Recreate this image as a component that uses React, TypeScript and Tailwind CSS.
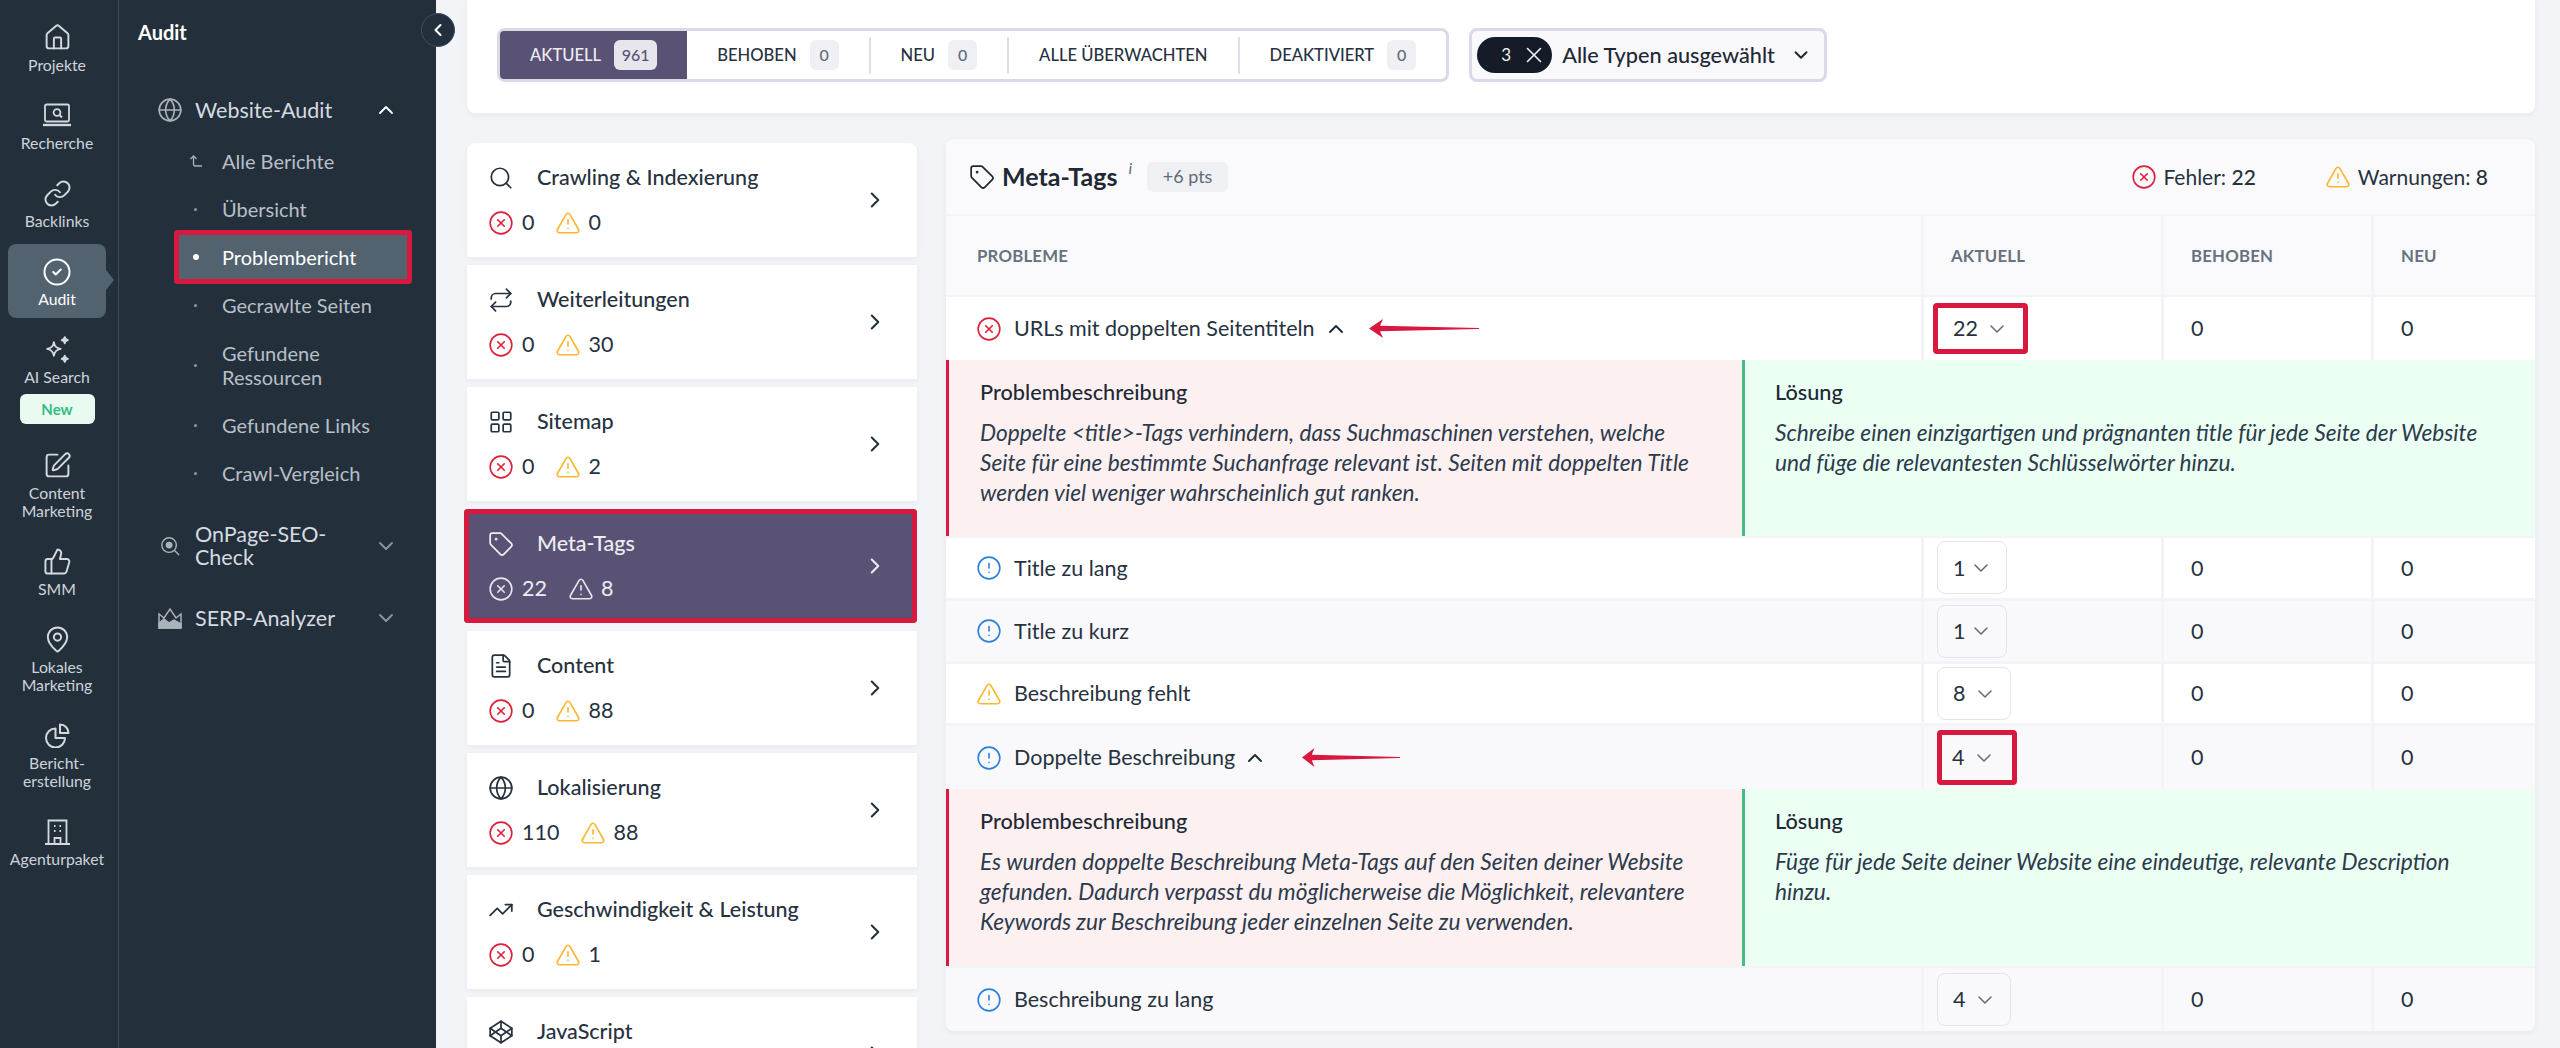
import React from 'react';
import {
  House, Link, CircleCheck, SquarePen, ThumbsUp, MapPin, Globe, ChevronUp, ChevronDown, ChevronRight, ChevronLeft,
  Search, Repeat, LayoutGrid, Tag, FileText, TrendingUp, Codepen, CircleX, TriangleAlert, CircleAlert, X,
} from 'lucide-react';

const railIcon = 'w-[29px] h-[29px] shrink-0 text-[#d4d9de]';

const ResearchIcon = () => (
  <svg viewBox="0 0 28 25" className="w-[28px] h-[25px] text-[#d4d9de]" fill="none" stroke="currentColor" strokeWidth="1.8">
    <rect x="2" y="1.5" width="24" height="17" rx="1.5" />
    <circle cx="14" cy="9.5" r="3.4" />
    <path d="M16.5 12l2.5 2.5" />
    <path d="M0 22h28" strokeWidth="2.4" />
  </svg>
);

const SparkIcon = () => (
  <svg viewBox="0 0 26 26" className="w-[27px] h-[27px] shrink-0 text-[#d4d9de]" fill="none" stroke="currentColor" strokeWidth="1.7" strokeLinejoin="round">
    <path d="M9.500 6c.9 4.200 2.300 5.600 6.500 6.500-4.200.9-5.600 2.300-6.500 6.500-.9-4.200-2.300-5.600-6.500-6.500 4.200-.9 5.600-2.300 6.500-6.500z" />
    <path d="M20 1c.4 1.900 1 2.500 3 3-2 .5-2.600 1.100-3 3-.4-1.900-1-2.500-3-3 2-.5 2.600-1.100 3-3z" fill="currentColor" />
    <path d="M20 19c.4 1.900 1 2.500 3 3-2 .5-2.600 1.100-3 3-.4-1.900-1-2.500-3-3 2-.5 2.600-1.100 3-3z" fill="currentColor" />
  </svg>
);

const ReportIcon = () => (
  <svg viewBox="0 0 25 25" className="w-[25px] h-[25px] shrink-0 text-[#d4d9de]" fill="none" stroke="currentColor" strokeWidth="2" strokeLinejoin="round">
    <path d="M10.500 5.500a9.500 9.500 0 1 0 9.500 9.500h-9.500z" />
    <path d="M15 1.500a8.500 8.500 0 0 1 8.500 8.500H15z" />
  </svg>
);

const AgencyIcon = () => (
  <svg viewBox="0 0 25 26" className="w-[25px] h-[26px] shrink-0 text-[#d4d9de]" fill="none" stroke="currentColor" strokeWidth="1.8">
    <path d="M3.500 25V1.500h18V25" />
    <path d="M0 25h25" strokeWidth="2" />
    <path d="M9.500 25v-6h6v6" />
    <path d="M9 7h1.500M14.500 7H16M9 12h1.500M14.500 12H16" strokeWidth="2" />
  </svg>
);

const SerpIcon = () => (
  <svg viewBox="0 0 24 22" className="w-[24px] h-[22px] text-[#aab2ba]" fill="none" stroke="currentColor" strokeWidth="1.500">
    <path d="M1 21V7l5 4 6-9 6 9 5-4v14z" />
    <path d="M1 21v-5l5-4 5 4 5-3 7 4v4z" fill="currentColor" />
  </svg>
);

const OnPageIcon = () => (
  <svg viewBox="0 0 22 22" className="w-[20px] h-[20px] text-[#aab2ba]" fill="none" stroke="currentColor" strokeWidth="1.600">
    <circle cx="10" cy="10" r="8" />
    <circle cx="10" cy="10" r="3" fill="currentColor" />
    <path d="M16 16l5 5" />
  </svg>
);

const BackIcon = () => (
  <svg viewBox="0 0 12 12" className="w-[12px] h-[12px] text-[#aab2ba]" fill="none" stroke="currentColor" strokeWidth="1.300">
    <path d="M3.500 1V9q0 2 2 2H12" />
    <path d="M.5 4 3.500 1 6.500 4" />
  </svg>
);

const railItems = [
  { label: ['Projekte'], icon: <House className={railIcon} strokeWidth={1.6} /> },
  { label: ['Recherche'], icon: <ResearchIcon /> },
  { label: ['Backlinks'], icon: <Link className={railIcon} strokeWidth={1.6} /> },
  { label: ['Audit'], icon: <CircleCheck className="w-[30px] h-[30px] shrink-0 text-white" strokeWidth={1.6} />, active: true },
  { label: ['AI Search'], icon: <SparkIcon />, badge: true },
  { label: ['Content', 'Marketing'], icon: <SquarePen className={railIcon} strokeWidth={1.6} /> },
  { label: ['SMM'], icon: <ThumbsUp className={railIcon} strokeWidth={1.6} /> },
  { label: ['Lokales', 'Marketing'], icon: <MapPin className={railIcon} strokeWidth={1.6} /> },
  { label: ['Bericht-', 'erstellung'], icon: <ReportIcon /> },
  { label: ['Agenturpaket'], icon: <AgencyIcon /> },
];

const subItems = [
  { label: 'Alle Berichte', back: true },
  { label: 'Übersicht' },
  { label: 'Problembericht', active: true },
  { label: 'Gecrawlte Seiten' },
  { label: 'Gefundene Ressourcen', tall: true },
  { label: 'Gefundene Links' },
  { label: 'Crawl-Vergleich' },
];

const Rail = () => (
  <div className="w-[119px] shrink-0 h-full border-r border-[#414d5a] pt-[10px] pl-[8px] flex flex-col gap-[4px] items-start">
    {railItems.map((item) => (
      <div
        key={item.label[0]}
        className={
          item.active
            ? 'relative w-[98px] h-[74px] pt-[15px] rounded-lg bg-[#52626f] flex flex-col items-center shrink-0'
            : item.badge
            ? 'w-[98px] pt-[15px] mb-[10px] flex flex-col items-center shrink-0'
            : item.label.length > 1
            ? 'w-[98px] h-[92px] pt-[15px] flex flex-col items-center shrink-0'
            : 'w-[98px] h-[74px] pt-[15px] flex flex-col items-center shrink-0'
        }
      >
        <div className="h-[25px] flex items-center justify-center">{item.icon}</div>
        <div className={item.active ? 'mt-[6px] text-[15.800px] leading-[18px] text-white text-center' : 'mt-[6px] text-[15.800px] leading-[18px] text-[#ced3d9] text-center whitespace-nowrap'}>
          {item.label.map((line) => (
            <div key={line}>{line}</div>
          ))}
        </div>
        {item.badge && (
          <div className="mt-[8px] w-[75px] h-[30px] rounded-md bg-[#e9fbf1] text-[#35bb82] text-[15px] font-bold flex items-center justify-center">New</div>
        )}
        {item.active && (
          <div className="absolute right-[-8px] top-[26px] w-0 h-0 border-y-[10px] border-y-transparent border-l-[8px] border-l-[#52626f]"></div>
        )}
      </div>
    ))}
  </div>
);

const SubNav = () => (
  <div className="w-[317px] shrink-0 h-full relative">
    <div className="pl-[19px] pt-[20px] text-[20px] leading-[24px] font-bold text-white">Audit</div>
    <div className="mt-[42px] flex flex-col">
      <div className="h-[48px] mb-[3px] pl-[38px] pr-[38px] flex items-center text-[#d6dbe0]">
        <Globe className="w-[26px] h-[26px] shrink-0 text-[#aab2ba]" strokeWidth={1.5} />
        <span className="ml-[12px] text-[21.500px] flex-1">Website-Audit</span>
        <ChevronUp className="w-[24px] h-[24px] text-white" strokeWidth={1.8} />
      </div>
      {subItems.map((item) => (
        <div
          key={item.label}
          className={
            item.active
              ? 'ml-[55px] w-[238px] h-[54px] -my-[3px] relative z-10 flex items-center bg-[#52626f] outline-[5px] outline-[#d7193f] -outline-offset-[5px] rounded-sm text-white'
              : item.tall
              ? 'ml-[55px] w-[238px] h-[72px] flex items-center text-[#b8bfc7]'
              : 'ml-[55px] w-[238px] h-[48px] flex items-center text-[#b8bfc7]'
          }
        >
          <div className="w-[43px] flex justify-center shrink-0">
            {item.back ? (
              <BackIcon />
            ) : (
              <span className={item.active ? 'w-[6px] h-[6px] rounded-full bg-white' : 'w-[3px] h-[3px] rounded-full bg-[#8e98a2]'}></span>
            )}
          </div>
          <span className={item.tall ? 'ml-[5px] w-[120px] text-[20px] leading-[24px]' : 'ml-[5px] text-[20px] leading-[24px]'}>{item.label}</span>
        </div>
      ))}
      <div className="mt-[25px] h-[48px] pl-[41px] pr-[38px] flex items-center text-[#d6dbe0]">
        <OnPageIcon />
        <span className="ml-[15px] w-[150px] text-[21.500px] leading-[23px] flex-1">OnPage-SEO-Check</span>
        <ChevronDown className="w-[24px] h-[24px] text-[#8e98a2]" strokeWidth={1.8} />
      </div>
      <div className="mt-[24px] h-[48px] pl-[39px] pr-[38px] flex items-center text-[#d6dbe0]">
        <SerpIcon />
        <span className="ml-[13px] text-[21.500px] flex-1">SERP-Analyzer</span>
        <ChevronDown className="w-[24px] h-[24px] text-[#8e98a2]" strokeWidth={1.8} />
      </div>
    </div>
    <div className="absolute top-[13px] right-[-19px] z-20 w-[34px] h-[34px] rounded-full bg-[#232f3c] border border-[#414d5a] flex items-center justify-center">
      <ChevronLeft className="w-[20px] h-[20px] text-white" strokeWidth={2.500} />
    </div>
  </div>
);

const tabs = [
  { label: 'BEHOBEN', count: '0' },
  { label: 'NEU', count: '0', divider: true },
  { label: 'ALLE ÜBERWACHTEN', divider: true },
  { label: 'DEAKTIVIERT', count: '0', divider: true },
];

const TopBar = () => (
  <div className="h-[113px] bg-white rounded-b-lg shadow-[0_2px_6px_rgba(30,40,70,0.05)] pt-[28px] pl-[30px] flex items-start gap-[20px]">
    <div className="h-[54px] border-[3px] border-[#d8dbe6] rounded-lg flex items-center">
      <div className="h-[48px] px-[30px] bg-[#5a5275] rounded-l-sm flex items-center gap-[13px] text-[16.600px] font-medium text-[#eeedf2]">
        AKTUELL
        <span className="w-[43px] h-[30px] rounded-md bg-[#e7e6ed] text-[#5a5275] text-[16px] flex items-center justify-center">961</span>
      </div>
      {tabs.map((tab) => (
        <React.Fragment key={tab.label}>
          {tab.divider && <div className="w-[2px] h-[37px] bg-[#dcdfe8]"></div>}
          <div className="h-[48px] px-[30px] flex items-center gap-[13px] text-[16.600px] font-medium text-[#27323f]">
            {tab.label}
            {tab.count && (
              <span className="w-[29px] h-[30px] rounded-md bg-[#eff0f4] text-[#5f6b7a] text-[16px] flex items-center justify-center">{tab.count}</span>
            )}
          </div>
        </React.Fragment>
      ))}
    </div>
    <div className="w-[358px] h-[54px] border-[3px] border-[#d8dbe6] rounded-lg bg-[#f9f9fc] flex items-center pl-[5px]">
      <div className="w-[75px] h-[36px] rounded-full bg-[#151c27] text-[#eef0f3] text-[17px] flex items-center justify-end pr-[5px] gap-[10px] shrink-0">
        3
        <X className="w-[26px] h-[26px]" strokeWidth={1.500} />
      </div>
      <span className="ml-[10px] text-[21.700px] font-medium text-[#1e2935] whitespace-nowrap">Alle Typen ausgewählt</span>
      <ChevronDown className="ml-[15px] w-[22px] h-[22px] shrink-0 text-[#1e2935]" strokeWidth={2.200} />
    </div>
  </div>
);

const ErrIcon = ({ light }: { light?: boolean }) => (
  <CircleX className={light ? 'w-[26px] h-[26px] shrink-0 text-[#e6e5ec]' : 'w-[26px] h-[26px] shrink-0 text-[#de2038]'} strokeWidth={1.500} />
);
const WarnIcon = ({ light }: { light?: boolean }) => (
  <TriangleAlert className={light ? 'w-[26px] h-[26px] shrink-0 text-[#e6e5ec]' : 'w-[26px] h-[26px] shrink-0 text-[#fdb62f]'} strokeWidth={1.500} />
);

const catIcon = 'w-[26px] h-[26px] shrink-0';

const categories = [
  { title: 'Crawling & Indexierung', err: '0', warn: '0', icon: <Search className={catIcon} strokeWidth={1.6} /> },
  { title: 'Weiterleitungen', err: '0', warn: '30', icon: <Repeat className={catIcon} strokeWidth={1.6} /> },
  { title: 'Sitemap', err: '0', warn: '2', icon: <LayoutGrid className={catIcon} strokeWidth={1.6} /> },
  { title: 'Meta-Tags', err: '22', warn: '8', active: true, icon: <Tag className={catIcon} strokeWidth={1.6} /> },
  { title: 'Content', err: '0', warn: '88', icon: <FileText className={catIcon} strokeWidth={1.6} /> },
  { title: 'Lokalisierung', err: '110', warn: '88', icon: <Globe className={catIcon} strokeWidth={1.6} /> },
  { title: 'Geschwindigkeit & Leistung', err: '0', warn: '1', icon: <TrendingUp className={catIcon} strokeWidth={1.6} /> },
  { title: 'JavaScript', icon: <Codepen className={catIcon} strokeWidth={1.6} /> },
];

const CategoryList = () => (
  <div className="w-[450px] shrink-0 mt-[29.500px] flex flex-col gap-[8px]">
    {categories.map((cat, i) => (
      <div
        key={cat.title}
        className={
          cat.active
            ? '-ml-[3px] h-[114px] shrink-0 pl-[26px] pt-[20px] pr-[29px] bg-[#5a5275] text-[#eeedf2] outline-[5px] outline-[#d7193f] -outline-offset-[5px] rounded-sm flex items-center'
            : i === 0
            ? 'h-[114px] shrink-0 pl-[23px] pt-[20px] pr-[29px] bg-white text-[#27323f] rounded-t-lg shadow-[0_2px_6px_rgba(30,40,70,0.05)] flex items-center'
            : 'h-[114px] shrink-0 pl-[23px] pt-[20px] pr-[29px] bg-white text-[#27323f] shadow-[0_2px_6px_rgba(30,40,70,0.05)] flex items-center'
        }
      >
        <div className="flex-1 self-start">
          <div className="h-[30px] flex items-center">
            <div className="w-[22px] flex justify-center">{cat.icon}</div>
            <span className="ml-[25px] text-[21.500px] font-medium whitespace-nowrap">{cat.title}</span>
          </div>
          {cat.err && (
            <div className="mt-[15px] -ml-[2px] h-[30px] flex items-center text-[21.500px]">
              <ErrIcon light={cat.active} />
              <span className="ml-[8px]">{cat.err}</span>
              <span className="ml-[21px]">
                <WarnIcon light={cat.active} />
              </span>
              <span className="ml-[7px]">{cat.warn}</span>
            </div>
          )}
        </div>
        <ChevronRight className="w-[26px] h-[26px] -mt-[20px] shrink-0" strokeWidth={1.900} />
      </div>
    ))}
  </div>
);

const Arrow = ({ className }: { className: string }) => (
  <svg viewBox="0 0 110 20" preserveAspectRatio="none" className={`h-[19px] shrink-0 ${className}`}>
    <path d="M0 10 14 0 11 7 110 9.400V10.600L11 13 14 20Z" fill="#d7193f" />
  </svg>
);

const DropChevron = () => <ChevronDown className="w-[24px] h-[24px] shrink-0 text-[#5f6b7a]" strokeWidth={1.500} />;

const Count = ({ value, className }: { value: string; className: string }) => (
  <div className={`flex items-center text-[21.500px] ${className}`}>
    {value}
    <DropChevron />
  </div>
);

const plainCount = 'h-[53px] pl-[15px] border border-[#e3e5ec] rounded-lg';
const redCount = 'outline-[5px] outline-[#d7193f] -outline-offset-[5px] rounded-sm';

type RowProps = {
  icon: React.ReactNode;
  label: string;
  count: React.ReactNode;
  className: string;
  extra?: React.ReactNode;
};

const Row = ({ icon, label, count, className, extra }: RowProps) => (
  <div className={`grid grid-cols-[975px_240px_210px_1fr] text-[21.500px] text-[#27323f] shrink-0 ${className}`}>
    <div className="pl-[30px] flex items-center">
      {icon}
      <span className="ml-[12px] whitespace-nowrap">{label}</span>
      {extra}
    </div>
    <div className="border-l-[3px] border-[#f2f4f8] pl-[13px] flex items-center">{count}</div>
    <div className="border-l-[3px] border-[#f2f4f8] pl-[27px] flex items-center">0</div>
    <div className="border-l-[3px] border-[#f2f4f8] pl-[27px] flex items-center">0</div>
  </div>
);

const InfoIcon = () => <CircleAlert className="w-[26px] h-[26px] shrink-0 text-[#2f80d8]" strokeWidth={1.500} />;

const Detail = ({ problem, solution, className }: { problem: string[]; solution: string[]; className: string }) => (
  <div className={`flex shrink-0 border-b-[2px] border-[#f2f4f8] ${className}`}>
    <div className="w-[796px] shrink-0 border-l-[3px] border-[#d7193f] bg-[#fdf0f1] pl-[31px] pt-[19px]">
      <div className="text-[21.700px] leading-[26px] font-medium text-[#1e2935]">Problembeschreibung</div>
      <div className="mt-[13px] text-[22.700px] leading-[30px] italic text-[#2c3b4c]">
        {problem.map((line) => (
          <div key={line} className="whitespace-nowrap">{line}</div>
        ))}
      </div>
    </div>
    <div className="flex-1 border-l-[3px] border-[#45bc86] bg-[#ebfff3] pl-[30px] pt-[19px]">
      <div className="text-[21.700px] leading-[26px] font-medium text-[#1e2935]">Lösung</div>
      <div className="mt-[13px] text-[22.700px] leading-[30px] italic text-[#2c3b4c]">
        {solution.map((line) => (
          <div key={line} className="whitespace-nowrap">{line}</div>
        ))}
      </div>
    </div>
  </div>
);

const headCell = 'border-l-[3px] border-[#f2f4f8] pl-[27px] flex items-center';

const IssuePanel = () => (
  <div className="flex-1 mt-[26px] h-[892px] bg-[#fafafc] rounded-lg shadow-[0_2px_6px_rgba(30,40,70,0.05)] flex flex-col overflow-hidden">
    <div className="h-[77px] shrink-0 border-b-[2px] border-[#f2f4f8] pl-[23px] pr-[47px] flex items-center">
      <Tag className="w-[26px] h-[26px] shrink-0 text-[#1e2935]" strokeWidth={1.6} />
      <span className="ml-[7px] text-[25px] font-bold text-[#1e2935]">Meta-Tags</span>
      <span className="ml-[11px] -mt-[18px] text-[16px] italic text-[#5f6b7a]">i</span>
      <span className="ml-[15px] w-[81px] h-[30px] rounded-md bg-[#eff0f3] text-[#5f6b7a] text-[18px] flex items-center justify-center">+6 pts</span>
      <div className="flex-1"></div>
      <CircleX className="w-[26px] h-[26px] shrink-0 text-[#de2038]" strokeWidth={1.500} />
      <span className="ml-[6px] text-[21px] text-[#27323f]">Fehler: <span className="font-medium">22</span></span>
      <span className="ml-[69px]">
        <TriangleAlert className="w-[26px] h-[26px] text-[#fdb62f]" strokeWidth={1.500} />
      </span>
      <span className="ml-[7px] text-[21px] text-[#27323f]">Warnungen: <span className="font-medium">8</span></span>
    </div>
    <div className="h-[81px] shrink-0 border-b-[2px] border-[#f2f4f8] grid grid-cols-[975px_240px_210px_1fr] text-[16.800px] font-bold tracking-[0.2px] text-[#667280]">
      <div className="pl-[31px] flex items-center">PROBLEME</div>
      <div className={headCell}>AKTUELL</div>
      <div className={headCell}>BEHOBEN</div>
      <div className={headCell}>NEU</div>
    </div>
    <Row
      className="h-[63px] bg-white"
      icon={<CircleX className="w-[26px] h-[26px] shrink-0 text-[#de2038]" strokeWidth={1.500} />}
      label="URLs mit doppelten Seitentiteln"
      count={<Count value="22" className={`-ml-[4px] w-[95px] h-[51px] pl-[20px] gap-[7px] ${redCount}`} />}
      extra={
        <>
          <ChevronUp className="ml-[9px] w-[24px] h-[24px] shrink-0 text-[#1e2935]" strokeWidth={1.900} />
          <Arrow className="ml-[21px] w-[110px]" />
        </>
      }
    />
    <Detail
      className="h-[177.500px]"
      problem={[
        'Doppelte <title>-Tags verhindern, dass Suchmaschinen verstehen, welche',
        'Seite für eine bestimmte Suchanfrage relevant ist. Seiten mit doppelten Title',
        'werden viel weniger wahrscheinlich gut ranken.',
      ]}
      solution={[
        'Schreibe einen einzigartigen und prägnanten title für jede Seite der Website',
        'und füge die relevantesten Schlüsselwörter hinzu.',
      ]}
    />
    <Row
      className="h-[63.500px] bg-white border-b-[3px] border-[#f2f4f8]"
      icon={<InfoIcon />}
      label="Title zu lang"
      count={<Count value="1" className={`w-[70px] gap-[4px] ${plainCount}`} />}
    />
    <Row
      className="h-[63px] bg-[#f9f9fc] border-b-[3px] border-[#f2f4f8]"
      icon={<InfoIcon />}
      label="Title zu kurz"
      count={<Count value="1" className={`w-[70px] gap-[4px] ${plainCount}`} />}
    />
    <Row
      className="h-[62px] bg-white border-b-[3px] border-[#f2f4f8]"
      icon={<TriangleAlert className="w-[26px] h-[26px] shrink-0 text-[#fdb62f]" strokeWidth={1.500} />}
      label="Beschreibung fehlt"
      count={<Count value="8" className={`w-[74px] gap-[8px] ${plainCount}`} />}
    />
    <Row
      className="h-[63px] bg-[#f9f9fc]"
      icon={<InfoIcon />}
      label="Doppelte Beschreibung"
      count={<Count value="4" className={`w-[80px] h-[55px] pl-[15px] gap-[8px] ${redCount}`} />}
      extra={
        <>
          <ChevronUp className="ml-[8px] w-[24px] h-[24px] shrink-0 text-[#1e2935]" strokeWidth={1.900} />
          <Arrow className="ml-[35px] w-[98px]" />
        </>
      }
    />
    <Detail
      className="h-[179px]"
      problem={[
        'Es wurden doppelte Beschreibung Meta-Tags auf den Seiten deiner Website',
        'gefunden. Dadurch verpasst du möglicherweise die Möglichkeit, relevantere',
        'Keywords zur Beschreibung jeder einzelnen Seite zu verwenden.',
      ]}
      solution={['Füge für jede Seite deiner Website eine eindeutige, relevante Description', 'hinzu.']}
    />
    <Row
      className="h-[63px] bg-[#f9f9fc]"
      icon={<InfoIcon />}
      label="Beschreibung zu lang"
      count={<Count value="4" className={`w-[74px] gap-[8px] ${plainCount}`} />}
    />
  </div>
);

export default function App() {
  return (
    <div className="w-screen h-screen overflow-hidden flex bg-[#f2f4f8] font-['Lato',sans-serif]">
      <div className="w-[436px] shrink-0 h-full flex bg-[#242f3c]">
        <Rail />
        <SubNav />
      </div>
      <div className="flex-1 min-w-0 pl-[31px] pr-[25px] h-full">
        <TopBar />
        <div className="flex gap-[29px]">
          <CategoryList />
          <IssuePanel />
        </div>
      </div>
    </div>
  );
}
